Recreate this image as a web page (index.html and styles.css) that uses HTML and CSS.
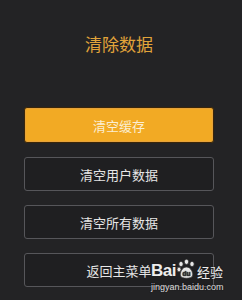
FILE: index.html
```html
<!DOCTYPE html>
<html>
<head>
<meta charset="utf-8">
<link rel="stylesheet" href="styles.css">
</head>
<body>
<div class="screen">
  <h1 class="title">清除数据</h1>
  <div class="menu">
    <div class="btn primary">清空缓存</div>
    <div class="btn">清空用户数据</div>
    <div class="btn">清空所有数据</div>
    <div class="btn">返回主菜单</div>
  </div>
  <div class="wm">
    <div class="wm-top">
      <span class="wm-bai">Bai</span>
      <svg class="wm-paw" width="21" height="21" viewBox="0 0 21 21">
        <ellipse cx="5" cy="5" rx="2.2" ry="2.6" fill="#e8e8e8" stroke="#333" stroke-width="0.8"/>
        <ellipse cx="10.5" cy="2.8" rx="2.2" ry="2.6" fill="#e8e8e8" stroke="#333" stroke-width="0.8"/>
        <ellipse cx="16" cy="5" rx="2.2" ry="2.6" fill="#e8e8e8" stroke="#333" stroke-width="0.8"/>
        <ellipse cx="3" cy="10.5" rx="2" ry="2.4" fill="#e8e8e8" stroke="#333" stroke-width="0.8"/>
        <path d="M10.5 8 C6 8 3.5 14 4.5 17 C5.5 20 15.5 20 16.5 17 C17.5 14 15 8 10.5 8 Z" fill="#e8e8e8" stroke="#333" stroke-width="0.8"/>
        <text x="10.5" y="17" text-anchor="middle" font-family="Liberation Sans, sans-serif" font-size="6.5" font-weight="bold" fill="#333">du</text>
      </svg>
      <span class="wm-jy">经验</span>
    </div>
    <div class="wm-url">jingyan.baidu.com</div>
  </div>
</div>
</body>
</html>
```

FILE: styles.css
```css
html, body {
  margin: 0;
  padding: 0;
  background: #232325;
}
.screen {
  position: relative;
  width: 242px;
  height: 300px;
  overflow: hidden;
  background: #232325;
  font-family: "Noto Sans CJK SC", "Noto Sans", sans-serif;
}
.title {
  margin: 0;
  padding-top: 32px;
  padding-right: 4px;
  height: 24px;
  text-align: center;
  font-size: 17px;
  line-height: 24px;
  font-weight: normal;
  color: #e2a43a;
}
.menu {
  display: flex;
  flex-direction: column;
  gap: 14px;
  margin-top: 51px;
  padding-left: 24px;
  padding-right: 28px;
}
.btn {
  height: 34px;
  box-sizing: border-box;
  border: 1px solid #56565a;
  border-radius: 3px;
  background: #1f1f21;
  color: #e6e6e6;
  font-size: 13px;
  line-height: 32px;
  text-align: center;
  padding-top: 1px;
}
.btn.primary {
  height: 36px;
  background: #f2aa24;
  border: 1px solid #3a2608;
  box-shadow: inset 0 0 0 1px #e6a23a;
  color: #fbeed2;
  line-height: 32px;
  padding-top: 2px;
}
.wm {
  position: absolute;
  left: 151px;
  top: 257px;
  display: flex;
  flex-direction: column;
  color: #ededed;
  text-shadow: 0 0 1px #222, 0 0 1px #222;
}
.wm-top {
  display: flex;
  align-items: flex-end;
  height: 22px;
}
.wm-bai {
  font-family: "Liberation Sans", sans-serif;
  font-size: 17px;
  font-weight: bold;
  line-height: 17px;
  letter-spacing: -0.5px;
}
.wm-paw {
  margin-bottom: -1px;
}
.wm-jy {
  font-size: 13px;
  line-height: 15px;
}
.wm-url {
  margin-top: 3px;
  font-family: "Liberation Sans", sans-serif;
  font-size: 9px;
  line-height: 10px;
  color: #dcdcdc;
}
```
